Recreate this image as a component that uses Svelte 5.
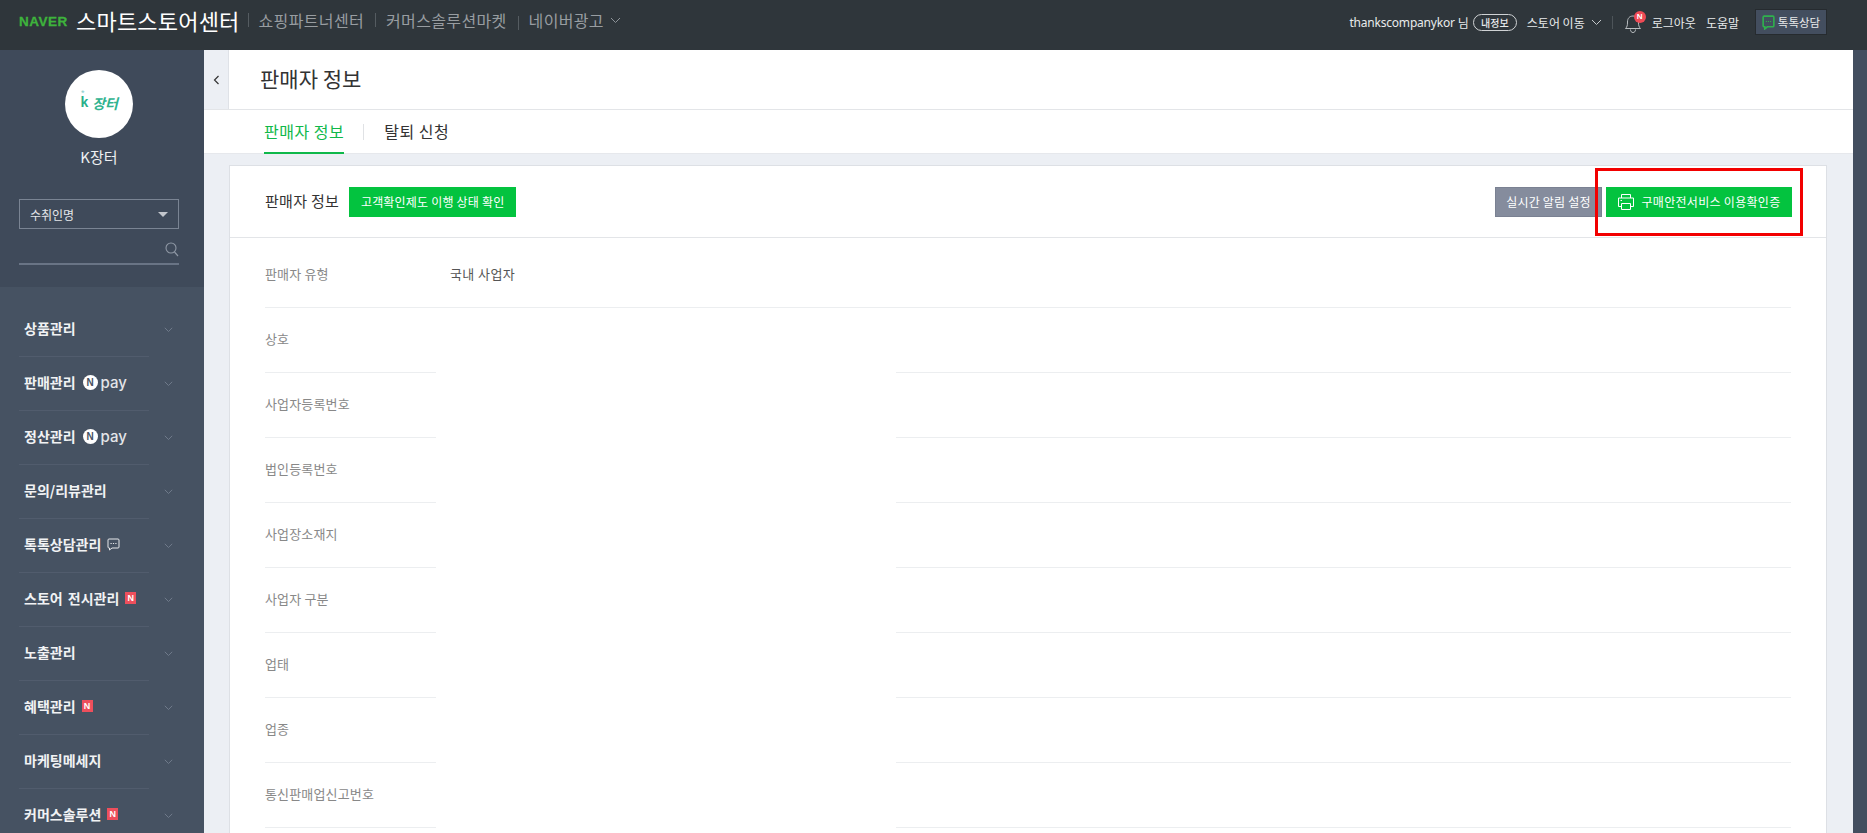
<script>
  const menu = [
    { label: '상품관리' },
    { label: '판매관리', extra: 'pay' },
    { label: '정산관리', extra: 'pay' },
    { label: '문의/리뷰관리' },
    { label: '톡톡상담관리', extra: 'chat' },
    { label: '스토어 전시관리', extra: 'new' },
    { label: '노출관리' },
    { label: '혜택관리', extra: 'new' },
    { label: '마케팅메세지' },
    { label: '커머스솔루션', extra: 'new' }
  ];
  const rows = ['상호', '사업자등록번호', '법인등록번호', '사업장소재지', '사업자 구분', '업태', '업종', '통신판매업신고번호'];
</script>

<div class="page">
  <header class="top">
    <div class="brand">
      <span class="naver">NAVER</span>
      <span class="center">스마트스토어센터</span>
    </div>
    <nav class="gnb">
      <a class="g1">쇼핑파트너센터</a>
      <a class="g2">커머스솔루션마켓</a>
      <a class="g3">네이버광고
        <svg class="chev" width="11" height="7" viewBox="0 0 11 7"><path d="M1 1l4.500 4.500L10 1" fill="none" stroke="#8d9398" stroke-width="1"/></svg>
      </a>
    </nav>
    <div class="util">
      <span class="user">thankscompanykor</span><span class="nim">님</span>
      <span class="pill">내정보</span>
      <span class="move">스토어 이동</span>
      <svg class="chev2" width="11" height="7" viewBox="0 0 11 7"><path d="M1 1l4.500 4.500L10 1" fill="none" stroke="#c4c8cb" stroke-width="1"/></svg>
      <span class="usep"></span>
      <span class="bell">
        <svg width="18" height="22" viewBox="0 0 18 22"><path d="M1.500 16.500c1.600-1.600 2-3 2-6.500 0-3.600 2-6 5.500-6s5.500 2.400 5.500 6c0 3.500.4 4.900 2 6.500z" fill="none" stroke="#b9bdc0" stroke-width="1"/><path d="M6.500 17.500c0 2 1.100 3 2.500 3s2.500-1 2.500-3" fill="none" stroke="#b9bdc0" stroke-width="1"/></svg>
        <span class="dot">N</span>
      </span>
      <span class="logout">로그아웃</span>
      <span class="help">도움말</span>
      <button class="talk">
        <svg width="13" height="15" viewBox="0 0 12 14"><path d="M2 1h8a1 1 0 0 1 1 1v8a1 1 0 0 1-1 1H5l-2.500 2v-2H2a1 1 0 0 1-1-1V2a1 1 0 0 1 1-1z" fill="none" stroke="#2fb14d" stroke-width="1.500"/><path d="M3.500 6h1M5.500 6h1M7.500 6h1" stroke="#2fb14d" stroke-width="1"/></svg>
        톡톡상담
      </button>
    </div>
  </header>

  <div class="body">
    <aside class="side">
      <div class="profile">
        <div class="avatar"><span class="star">*</span><span class="k">k</span><span class="jt">장터</span></div>
        <div class="store">K장터</div>
        <div class="select"><span>수취인명</span><i class="tri"></i></div>
        <div class="search">
          <svg width="14" height="15" viewBox="0 0 14 15"><circle cx="6" cy="6" r="5" fill="none" stroke="#8f98a5" stroke-width="1.100"/><path d="M9.500 10l3.500 4" stroke="#8f98a5" stroke-width="1.200"/></svg>
        </div>
      </div>
      <ul class="menu">
        {#each menu as m}
          <li>
            <span class="mlabel">{m.label}</span>
            {#if m.extra === 'pay'}
              <span class="ncircle">N</span><span class="pay">pay</span>
            {:else if m.extra === 'chat'}
              <svg class="mchat" width="13" height="13" viewBox="0 0 13 13"><path d="M2 1h9a1 1 0 0 1 1 1v7a1 1 0 0 1-1 1H5l-2.500 2v-2H2a1 1 0 0 1-1-1V2a1 1 0 0 1 1-1z" fill="none" stroke="#e6e8eb" stroke-width="1"/><path d="M3.500 5.500h1.200M5.900 5.500h1.200M8.300 5.500h1.200" stroke="#e6e8eb" stroke-width="1.100"/></svg>
            {:else if m.extra === 'new'}
              <span class="nnew">N</span>
            {/if}
            <svg class="mchev" width="9" height="6" viewBox="0 0 9 6"><path d="M.8.800l3.700 3.700L8.200.800" fill="none" stroke="#6f7a8a" stroke-width="1"/></svg>
          </li>
        {/each}
      </ul>
    </aside>

    <main class="main">
      <div class="titlebar">
        <div class="collapse">
          <svg width="7" height="10" viewBox="0 0 7 10"><path d="M5.500 1L1.500 5l4 4" fill="none" stroke="#333" stroke-width="1.200"/></svg>
        </div>
        <h1>판매자 정보</h1>
      </div>
      <div class="tabs">
        <a class="tab on">판매자 정보</a>
        <span class="tsep"></span>
        <a class="tab">탈퇴 신청</a>
      </div>
      <div class="content">
        <section class="card">
          <div class="chead">
            <h2>판매자 정보</h2>
            <button class="btn green check">고객확인제도 이행 상태 확인</button>
            <span class="grow"></span>
            <button class="btn gray">실시간 알림 설정</button>
            <button class="btn green print">
              <svg width="18" height="18" viewBox="0 0 18 18"><g fill="none" stroke="#fff" stroke-width="1"><path d="M4.500 5V1.500h9V5"/><path d="M4.500 13.500H1.500V5h15v8.500h-3"/><path d="M4.500 10.500h9v6h-9z"/></g><path d="M3.500 7.500h1.500" stroke="#fff"/></svg>
              구매안전서비스 이용확인증
            </button>
            <span class="redbox"></span>
          </div>
          <div class="r head">
            <div class="l">판매자 유형</div>
            <div class="v">국내 사업자</div>
          </div>
          {#each rows as r}
            <div class="r split">
              <div class="l">{r}</div>
              <div class="gap"></div>
              <div class="rv"></div>
            </div>
          {/each}
        </section>
      </div>
    </main>
    <div class="rail"></div>
  </div>
</div>

<style>
  :global(body) { margin: 0; background: #eceff4; }
  :global(html), :global(body) { overflow: hidden; }
  * { box-sizing: border-box; }
  .page { width: 1867px; height: 833px; overflow: hidden; font-family: "Noto Sans CJK KR", "Noto Sans", sans-serif; color: #333; position: relative; }

  .top { height: 50px; background: #2f363b; display: flex; align-items: flex-start; color: #fff; }
  .brand { display: flex; align-items: center; height: 40px; padding-left: 19px; }
  .naver { font-family: "Liberation Sans", sans-serif; font-weight: 700; font-size: 13.500px; letter-spacing: .5px; color: #3eb33c; width: 57px; transform: translateY(1px); -webkit-text-stroke: .3px #3eb33c; }
  .center { font-size: 22px; letter-spacing: .2px; line-height: 40px; color: #fff; white-space: nowrap; }
  .gnb { display: flex; height: 40px; align-items: center; font-size: 16px; letter-spacing: .35px; color: #989da1; margin-left: 8px; }
  .gnb a { position: relative; padding-left: 11px; margin-right: 11px; white-space: nowrap; display: flex; align-items: center; }
  .gnb a::before { content: ""; position: absolute; left: 0; top: 5px; bottom: 5px; width: 1px; background: #555c61; }
  .g3 { margin-right: 0; }
  .g3::before { top: 8px !important; bottom: 2px !important; }
  .chev { margin-left: 6px; }

  .util { margin-left: auto; display: flex; align-items: center; height: 44px; padding-right: 40px; font-size: 12px; color: #e9ebec; white-space: nowrap; }
  .user { font-family: "Noto Sans", sans-serif; font-size: 12px; letter-spacing: -.2px; }
  .nim { margin-left: 3px; }
  .pill { margin-left: 4px; width: 44px; height: 17px; border: 1px solid #cfd2d4; border-radius: 9px; font-size: 10px; font-weight: 500; display: flex; align-items: center; justify-content: center; }
  .move { margin-left: 10px; }
  .chev2 { margin-left: 6px; }
  .usep { width: 1px; height: 13px; background: #4d5459; margin-left: 10px; }
  .bell { position: relative; width: 18px; height: 22px; margin-left: 11px; display: block; margin-top: 1px; }
  .dot { position: absolute; left: 10px; top: -1px; width: 12px; height: 12px; border-radius: 50%; background: #ef4a55; color: #fff; font: 700 8px/12px "Liberation Sans", sans-serif; text-align: center; }
  .logout { margin-left: 10px; }
  .help { margin-left: 10px; }
  .talk { margin-left: 16px; width: 72px; height: 26px; background: #434e5f; border: 1px solid #262b2f; color: #e9ebec; font: 11.500px "Noto Sans CJK KR", sans-serif; display: flex; align-items: center; justify-content: center; gap: 3px; padding: 0; }

  .body { display: flex; height: 783px; }
  .side { width: 204px; background: #465262; flex: none; }
  .profile { height: 237px; background: #3f4a5a; padding-top: 20px; padding-left: 19px; position: relative; }
  .avatar { width: 68px; height: 68px; border-radius: 50%; background: #fff; margin-left: 46px; display: flex; align-items: center; justify-content: center; color: #2fb38f; position: relative; font-weight: 700; padding-bottom: 3px; }
  .k { font: 700 14px "Liberation Sans", sans-serif; margin-right: 4px; color: #28b08a; transform: translateY(-1px); }
  .jt { font-size: 14px; letter-spacing: -.3px; font-style: italic; }
  .star { position: absolute; left: 16px; top: 18px; font: 9px "Liberation Sans", sans-serif; color: #8cc; }
  .store { width: 160px; margin-top: 9px; height: 20px; line-height: 20px; text-align: center; font-size: 15px; color: #eef0f2; }
  .select { width: 160px; height: 30px; margin-top: 32px; border: 1px solid #7a8493; padding-left: 10px; display: flex; align-items: center; font-size: 12px; color: #e4e6e9; position: relative; }
  .tri { position: absolute; right: 10px; top: 12px; border-left: 5px solid transparent; border-right: 5px solid transparent; border-top: 5px solid #c2c6cc; }
  .search { width: 160px; height: 36px; border-bottom: 2px solid #697485; display: flex; justify-content: flex-end; align-items: flex-end; padding-bottom: 6px; }

  .menu { list-style: none; margin: 16px 0 0; padding: 0 30px 0 19px; width: 179px; }
  .menu li { height: 54px; display: flex; align-items: center; border-bottom: 1px solid #515c6d; padding: 0 0 3px 5px; color: #f1f2f4; font-size: 14px; font-weight: 700; position: relative; white-space: nowrap; word-spacing: 2px; }
  .mlabel { line-height: 20px; }
  .ncircle { width: 15px; height: 15px; border-radius: 50%; background: #fff; color: #465262; font: 700 10px/15px "Liberation Sans", sans-serif; text-align: center; margin-left: 7px; }
  .pay { font: 500 15px "Inter", sans-serif; margin-left: 3px; color: #e3e5e8; }
  .mchat { margin-left: 6px; }
  .nnew { width: 11px; height: 12px; background: #ee4f5c; color: #fff; font: 700 9px/12px "Liberation Sans", sans-serif; text-align: center; margin-left: 6px; }
  .mchev { position: absolute; left: 145px; top: 24px; }

  .main { flex: 1; min-width: 0; background: #eceff4; }
  .titlebar { height: 60px; display: flex; background: #fff; border-bottom: 1px solid #e3e5e8; }
  .collapse { width: 25px; background: #eceff4; border-right: 1px solid #dfe2e7; display: flex; align-items: center; justify-content: center; padding-top: 1px; }
  h1 { margin: 0 0 0 31px; font-size: 21px; font-weight: 400; line-height: 56px; color: #333; }
  .tabs { height: 44px; background: #fff; border-bottom: 1px solid #e6e8ec; display: flex; align-items: center; padding-left: 60px; }
  .tab { font-size: 16px; letter-spacing: .5px; height: 44px; line-height: 42px; color: #333; }
  .tab.on { color: #0fb84a; border-bottom: 2px solid #0fb84a; }
  .tsep { width: 1px; height: 16px; background: #e0e2e5; margin: 0 20px 0 19px; }

  .content { padding: 11px 26px 0 25px; }
  .card { background: #fff; border: 1px solid #dde0e5; border-bottom: 0; padding: 0 35px; height: 700px; overflow: hidden; }
  .chead { height: 72px; margin: 0 -35px; padding: 0 34px 0 35px; border-bottom: 1px solid #e3e5e8; display: flex; align-items: center; position: relative; }
  h2 { margin: 0; font-size: 15px; font-weight: 400; letter-spacing: .3px; color: #333; transform: translateY(-1px); }
  .btn { height: 30px; border: 0; color: #fff; font: 12px "Noto Sans CJK KR", sans-serif; padding: 0; display: flex; align-items: center; justify-content: center; white-space: nowrap; }
  .green { background: #03c33f; }
  .gray { background: #858c9d; width: 107px; margin-right: 4px; border: 1px solid #7a8192; letter-spacing: .2px; }
  .check { width: 167px; margin-left: 10px; letter-spacing: .2px; }
  .print { width: 186px; gap: 6px; letter-spacing: .3px; }
  .redbox { position: absolute; left: 1365px; top: 2px; width: 208px; height: 68px; border: 3px solid #f20000; pointer-events: none; }
  .grow { flex: 1; }

  .r { display: flex; font-size: 13px; letter-spacing: .15px; }
  .r.head { height: 70px; border-bottom: 1px solid #eceef0; padding-top: 27px; }
  .r.head .l { line-height: 18px; }
  .r.split { height: 65px; }
  .l { color: #888; width: 171px; flex: none; white-space: nowrap; }
  .split .l { border-bottom: 1px solid #eceef0; line-height: 62px; height: 65px; }
  .v { color: #555; margin-left: 14px; line-height: 18px; white-space: nowrap; letter-spacing: .4px; }
  .gap { width: 460px; flex: none; }
  .rv { flex: 1; border-bottom: 1px solid #eceef0; }

  .rail { width: 14px; background: #434e5f; flex: none; }
</style>
